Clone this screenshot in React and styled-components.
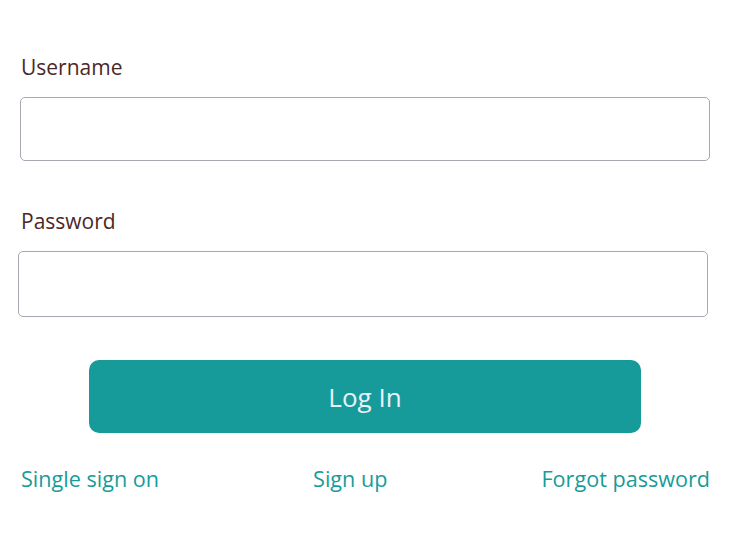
import React, { useState } from 'react';
import styled, { createGlobalStyle } from 'styled-components';

const Global = createGlobalStyle`
  body {
    margin: 0;
    background: #ffffff;
    font-family: "Open Sans", "Noto Sans", sans-serif;
  }
`;

const Page = styled.div`
  width: 730px;
  height: 546px;
  box-sizing: border-box;
  padding: 54px 20px 0 20px;
`;

const Field = styled.div`
  display: flex;
  flex-direction: column;
  margin-bottom: ${(p) => p.gap || 0}px;
  margin-left: ${(p) => p.shift || 0}px;
`;

const Label = styled.label`
  font-size: 21px;
  line-height: 26px;
  color: #4b2828;
  padding-left: ${(p) => p.indent || 1}px;
  margin-bottom: 17px;
`;

const Input = styled.input`
  box-sizing: border-box;
  width: 690px;
  height: ${(p) => p.h || 64}px;
  border: 1px solid #a9a6b4;
  border-radius: 5px;
  padding: 0 14px;
  font-size: 20px;
  font-family: inherit;
  outline: none;
`;

const Button = styled.button`
  display: block;
  width: 552px;
  height: 73px;
  margin: 43px auto 0 auto;
  border: none;
  border-radius: 10px;
  background: #169b9a;
  color: #e9f1f8;
  font-family: inherit;
  font-size: 26px;
  cursor: pointer;
`;

const Links = styled.div`
  display: flex;
  justify-content: space-between;
  align-items: center;
  margin-top: 31px;
  padding-left: 1px;
`;

const Link = styled.a`
  color: #179c99;
  font-size: 21.6px;
  text-decoration: none;
  cursor: pointer;
`;

export default function App() {
  const [user, setUser] = useState('');
  const [pass, setPass] = useState('');

  return (
    <>
      <Global />
      <Page>
        <Field gap={47}>
          <Label htmlFor="username">Username</Label>
          <Input id="username" value={user} onChange={(e) => setUser(e.target.value)} />
        </Field>
        <Field shift={-2}>
          <Label htmlFor="password" indent={3}>Password</Label>
          <Input id="password" type="password" h={66} value={pass} onChange={(e) => setPass(e.target.value)} />
        </Field>
        <Button>Log In</Button>
        <Links>
          <Link>Single sign on</Link>
          <Link>Sign up</Link>
          <Link>Forgot password</Link>
        </Links>
      </Page>
    </>
  );
}
